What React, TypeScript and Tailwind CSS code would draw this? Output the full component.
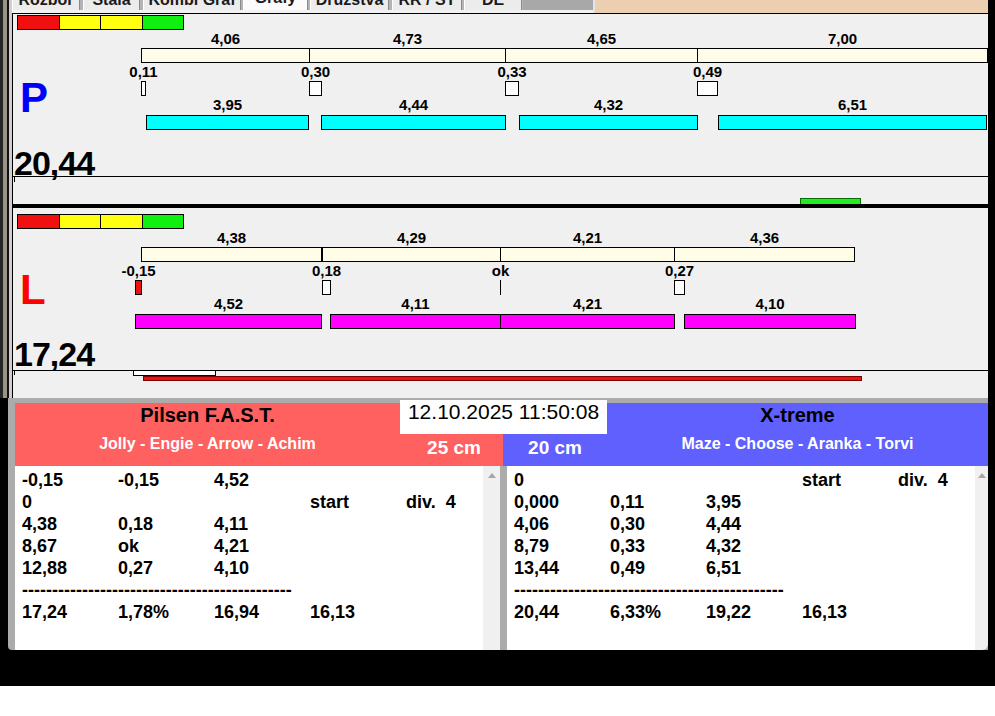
import { Fragment } from "react";

// chart x positions are page pixels; the canvas starts at x = 129
const X0 = 129;

type Span = [number, number, string, boolean?];

type ChartData = {
	cream: Span[];
	marks: Span[];
	bars: Span[];
};

const dataP: ChartData = {
	cream: [
		[141, 309, "4,06"],
		[309, 505, "4,73"],
		[505, 697, "4,65"],
		[697, 987, "7,00"],
	],
	marks: [
		[141, 145, "0,11"],
		[309, 321, "0,30"],
		[505, 518, "0,33"],
		[697, 717, "0,49"],
	],
	bars: [
		[146, 308, "3,95"],
		[321, 505, "4,44"],
		[519, 697, "4,32"],
		[718, 986, "6,51"],
	],
};

const dataL: ChartData = {
	cream: [
		[141, 321, "4,38"],
		[322, 500, "4,29"],
		[500, 674, "4,21"],
		[674, 854, "4,36"],
	],
	marks: [
		[135, 141, "-0,15", true],
		[322, 330, "0,18"],
		[500, 500, "ok"],
		[674, 684, "0,27"],
	],
	bars: [
		[135, 321, "4,52"],
		[330, 500, "4,11"],
		[500, 674, "4,21"],
		[684, 855, "4,10"],
	],
};

const leftRows = [
	["-0,15", "-0,15", "4,52"],
	["0", "", "", "start", "div.  4"],
	["4,38", "0,18", "4,11"],
	["8,67", "ok", "4,21"],
	["12,88", "0,27", "4,10"],
	["-".repeat(45)],
	["17,24", "1,78%", "16,94", "16,13"],
];

const rightRows = [
	["0", "", "", "start", "div.  4"],
	["0,000", "0,11", "3,95"],
	["4,06", "0,30", "4,44"],
	["8,79", "0,33", "4,32"],
	["13,44", "0,49", "6,51"],
	["-".repeat(45)],
	["20,44", "6,33%", "19,22", "16,13"],
];

const tabs = [
	{ label: "Rozbor", w: "w-[68px]", ml: "ml-0" },
	{ label: "Stála", w: "w-[57px]", ml: "ml-[3px]" },
	{ label: "Kombi Graf", w: "w-[98px]", ml: "ml-[3px]" },
	{ label: "Grafy", w: "w-[65px]", ml: "ml-[2px]", active: true },
	{ label: "Družstva", w: "w-[79px]", ml: "ml-[2px]" },
	{ label: "RR / ST", w: "w-[70px]", ml: "ml-[3px]" },
	{ label: "DE", w: "w-[58px]", ml: "ml-[2px]" },
];

function Tag({ center, text, top }: { center: number; text: string; top: string }) {
	return (
		<div
			className={`absolute ${top} w-[80px] text-center text-[15px] font-bold leading-[15px] text-black`}
			style={{ left: center - X0 - 40 }}
		>
			{text}
		</div>
	);
}

function Chart({ data, barClass }: { data: ChartData; barClass: string }) {
	return (
		<div className="relative flex-1">
			{data.cream.map(([l, r, t]) => (
				<Fragment key={"c" + l}>
					<Tag center={(l + r + 1) / 2} text={t} top="top-[1px]" />
					<div
						className="absolute top-[18px] h-[15px] border border-black bg-[#fffce8]"
						style={{ left: l - X0, width: r - l + 1 }}
					/>
				</Fragment>
			))}
			{data.marks.map(([l, r, t, red]) => (
				<Fragment key={"m" + l}>
					<Tag center={(l + r + 1) / 2} text={t} top="top-[34px]" />
					{l === r ? (
						<div
							className="absolute top-[51px] h-[15px] w-px bg-black"
							style={{ left: l - X0 }}
						/>
					) : (
						<div
							className={`absolute top-[51px] h-[15px] border border-black ${red ? "bg-[#ee1111]" : "bg-white"}`}
							style={{ left: l - X0, width: r - l + 1 }}
						/>
					)}
				</Fragment>
			))}
			{data.bars.map(([l, r, t]) => (
				<Fragment key={"b" + l}>
					<Tag center={(l + r + 1) / 2} text={t} top="top-[67px]" />
					<div
						className={`absolute top-[85px] h-[15px] border border-black ${barClass}`}
						style={{ left: l - X0, width: r - l + 1 }}
					/>
				</Fragment>
			))}
		</div>
	);
}

function ScaleBar() {
	return (
		<div className="ml-[4px] flex h-[15px] w-[167px] border border-black">
			<div className="flex-1 border-r border-black bg-[#f01010]" />
			<div className="flex-1 border-r border-black bg-[#ffff10]" />
			<div className="flex-1 border-r border-black bg-[#ffff10]" />
			<div className="flex-1 bg-[#10f010]" />
		</div>
	);
}

function ResultList({ rows }: { rows: string[][] }) {
	return (
		<div className="w-[468px] overflow-hidden bg-white pl-[7px] pt-[3px]">
			{rows.map((row, i) => (
				<div key={i} className="flex h-[22px] text-[18px] font-bold leading-[22px] text-black">
					{row.map((cell, j) => (
						<div
							key={j}
							className={`shrink-0 whitespace-pre ${row.length === 1 ? "" : "w-[96px]"}`}
						>
							{cell}
						</div>
					))}
				</div>
			))}
		</div>
	);
}

function ScrollUp() {
	return (
		<svg width="8" height="5" viewBox="0 0 8 5" className="mx-auto mt-[7px] block">
			<polygon points="0,5 4,0 8,5" fill="#a6a6a6" />
		</svg>
	);
}

export default function App() {
	return (
		<div className="h-[716px] w-[995px] bg-white font-['Liberation_Sans',Arial,sans-serif]">
			<div className="flex h-[686px] bg-black">
				{/* window frame, left */}
				<div className="flex h-[650px] w-[12px] flex-col">
					<div className="flex h-[398px]">
						<div className="w-[3px] bg-[#262626]" />
						<div className="w-[4px] bg-[#9a9488]" />
						<div className="w-[2px] bg-[#111111]" />
						<div className="w-[3px] bg-[#cfcfcf]" />
					</div>
					<div className="flex flex-1">
						<div className="w-[8px] bg-black" />
						<div className="w-[4px] rounded-bl-[5px] bg-[#ababab]" />
					</div>
				</div>

				<div className="flex h-[650px] w-[976px] flex-col">
					{/* tab strip, mostly scrolled out of view */}
					<div className="flex h-[13px]">
						<div className="flex w-[581px] flex-col">
							<div className="flex h-[10px] bg-[#b4b4b4]">
								{tabs.map((t) => (
									<div
										key={t.label}
										className={`${t.w} ${t.ml} h-full overflow-hidden border-l border-r border-l-white border-r-[#8a8a8a] ${t.active ? "bg-[#fbfbfb]" : "bg-[#ececec]"}`}
									>
										<div
											className={`whitespace-nowrap text-center text-[16px] font-bold leading-[16px] text-[#1a1a1a] ${t.active ? "-mt-[10px]" : "-mt-[8px]"}`}
										>
											{t.label}
										</div>
									</div>
								))}
								<div className="ml-[1px] flex-1 bg-[#a8a8a8]" />
							</div>
							<div className="h-[3px] bg-[#f2f2f2]" />
						</div>
						<div className="w-[2px] bg-[#e4e4e4]" />
						<div className="flex-1 bg-[#ecceb0]" />
					</div>

					{/* P lane */}
					<div className="flex h-[191px] flex-col border-l border-t border-black bg-[#f0f0f0] pt-[1px]">
						<ScaleBar />
						<div className="flex h-[105px]">
							<div className="w-[116px] pl-[7px] pt-[47px]">
								<span className="block text-[42px] font-bold leading-none text-[#0000ff]">P</span>
							</div>
							<Chart data={dataP} barClass="bg-[#00ffff]" />
						</div>
						<div className="h-[41px] pl-[1px] pt-[11px] text-[34px] font-bold leading-none tracking-[-1px] text-black">
							20,44
						</div>
						<div className="relative h-[28px] border-t border-black">
							<div className="absolute left-[1px] top-0 h-[5px] w-px bg-black" />
							<div className="absolute left-[787px] top-[21px] h-[6px] w-[61px] border border-b-0 border-[#0a6a0a] bg-[#22ee22]" />
						</div>
					</div>

					<div className="h-[4px] bg-black" />

					{/* L lane */}
					<div className="flex h-[190px] flex-col border-l border-black bg-[#f0f0f0] pt-[6px]">
						<ScaleBar />
						<div className="flex h-[105px]">
							<div className="w-[116px] pl-[7px] pt-[40px]">
								<span className="block text-[42px] font-bold leading-none text-[#ff0000]">L</span>
							</div>
							<Chart data={dataL} barClass="bg-[#ff00ff]" />
						</div>
						<div className="h-[36px] pl-[1px] pt-[3px] text-[34px] font-bold leading-none tracking-[-1px] text-black">
							17,24
						</div>
						<div className="relative h-[28px] border-t border-black">
							<div className="absolute left-[1px] top-0 h-[4px] w-px bg-black" />
							<div className="absolute left-[120px] top-[-1px] h-[6px] w-[83px] border border-black bg-white" />
							<div className="absolute left-[130px] top-[5px] h-[5px] w-[719px] border border-[#7a0000] bg-[#ee1111]" />
						</div>
					</div>

					{/* teams and results */}
					<div className="flex h-[252px] flex-col bg-[#ababab] pl-[3px] pt-[5px]">
						<div className="flex h-[63px]">
							<div className="flex w-[385px] flex-col items-center bg-[#ff6060] pt-[2px]">
								<div className="text-[20px] font-bold leading-none text-black">Pilsen F.A.S.T.</div>
								<div className="mt-[11px] text-[16px] font-bold leading-none text-white">
									Jolly - Engie - Arrow - Achim
								</div>
							</div>
							<div className="flex w-[207px] flex-col">
								<div className="-mt-[3px] h-[34px] bg-white pt-[1px] text-center text-[21px] leading-none text-black">
									12.10.2025 11:50:08
								</div>
								<div className="flex h-[32px]">
									<div className="w-[103px] bg-[#ff6060] pl-[5px] pt-[4px] text-center text-[19px] font-bold leading-none text-white">
										25 cm
									</div>
									<div className="w-[104px] bg-[#6060ff] pt-[4px] text-center text-[19px] font-bold leading-none text-white">
										20 cm
									</div>
								</div>
							</div>
							<div className="flex w-[381px] flex-col items-center bg-[#6060ff] pt-[2px]">
								<div className="text-[20px] font-bold leading-none text-black">X-treme</div>
								<div className="mt-[11px] text-[16px] font-bold leading-none text-white">
									Maze - Choose - Aranka - Torvi
								</div>
							</div>
						</div>

						<div className="flex h-[184px]">
							<ResultList rows={leftRows} />
							<div className="w-[17px] bg-[#f0f0f0]">
								<ScrollUp />
							</div>
							<div className="w-[7px]" />
							<ResultList rows={rightRows} />
							<div className="w-[13px] rounded-br-[6px] bg-[#f0f0f0]">
								<ScrollUp />
							</div>
						</div>
					</div>
				</div>

				<div className="w-[7px] bg-black" />
			</div>
		</div>
	);
}
